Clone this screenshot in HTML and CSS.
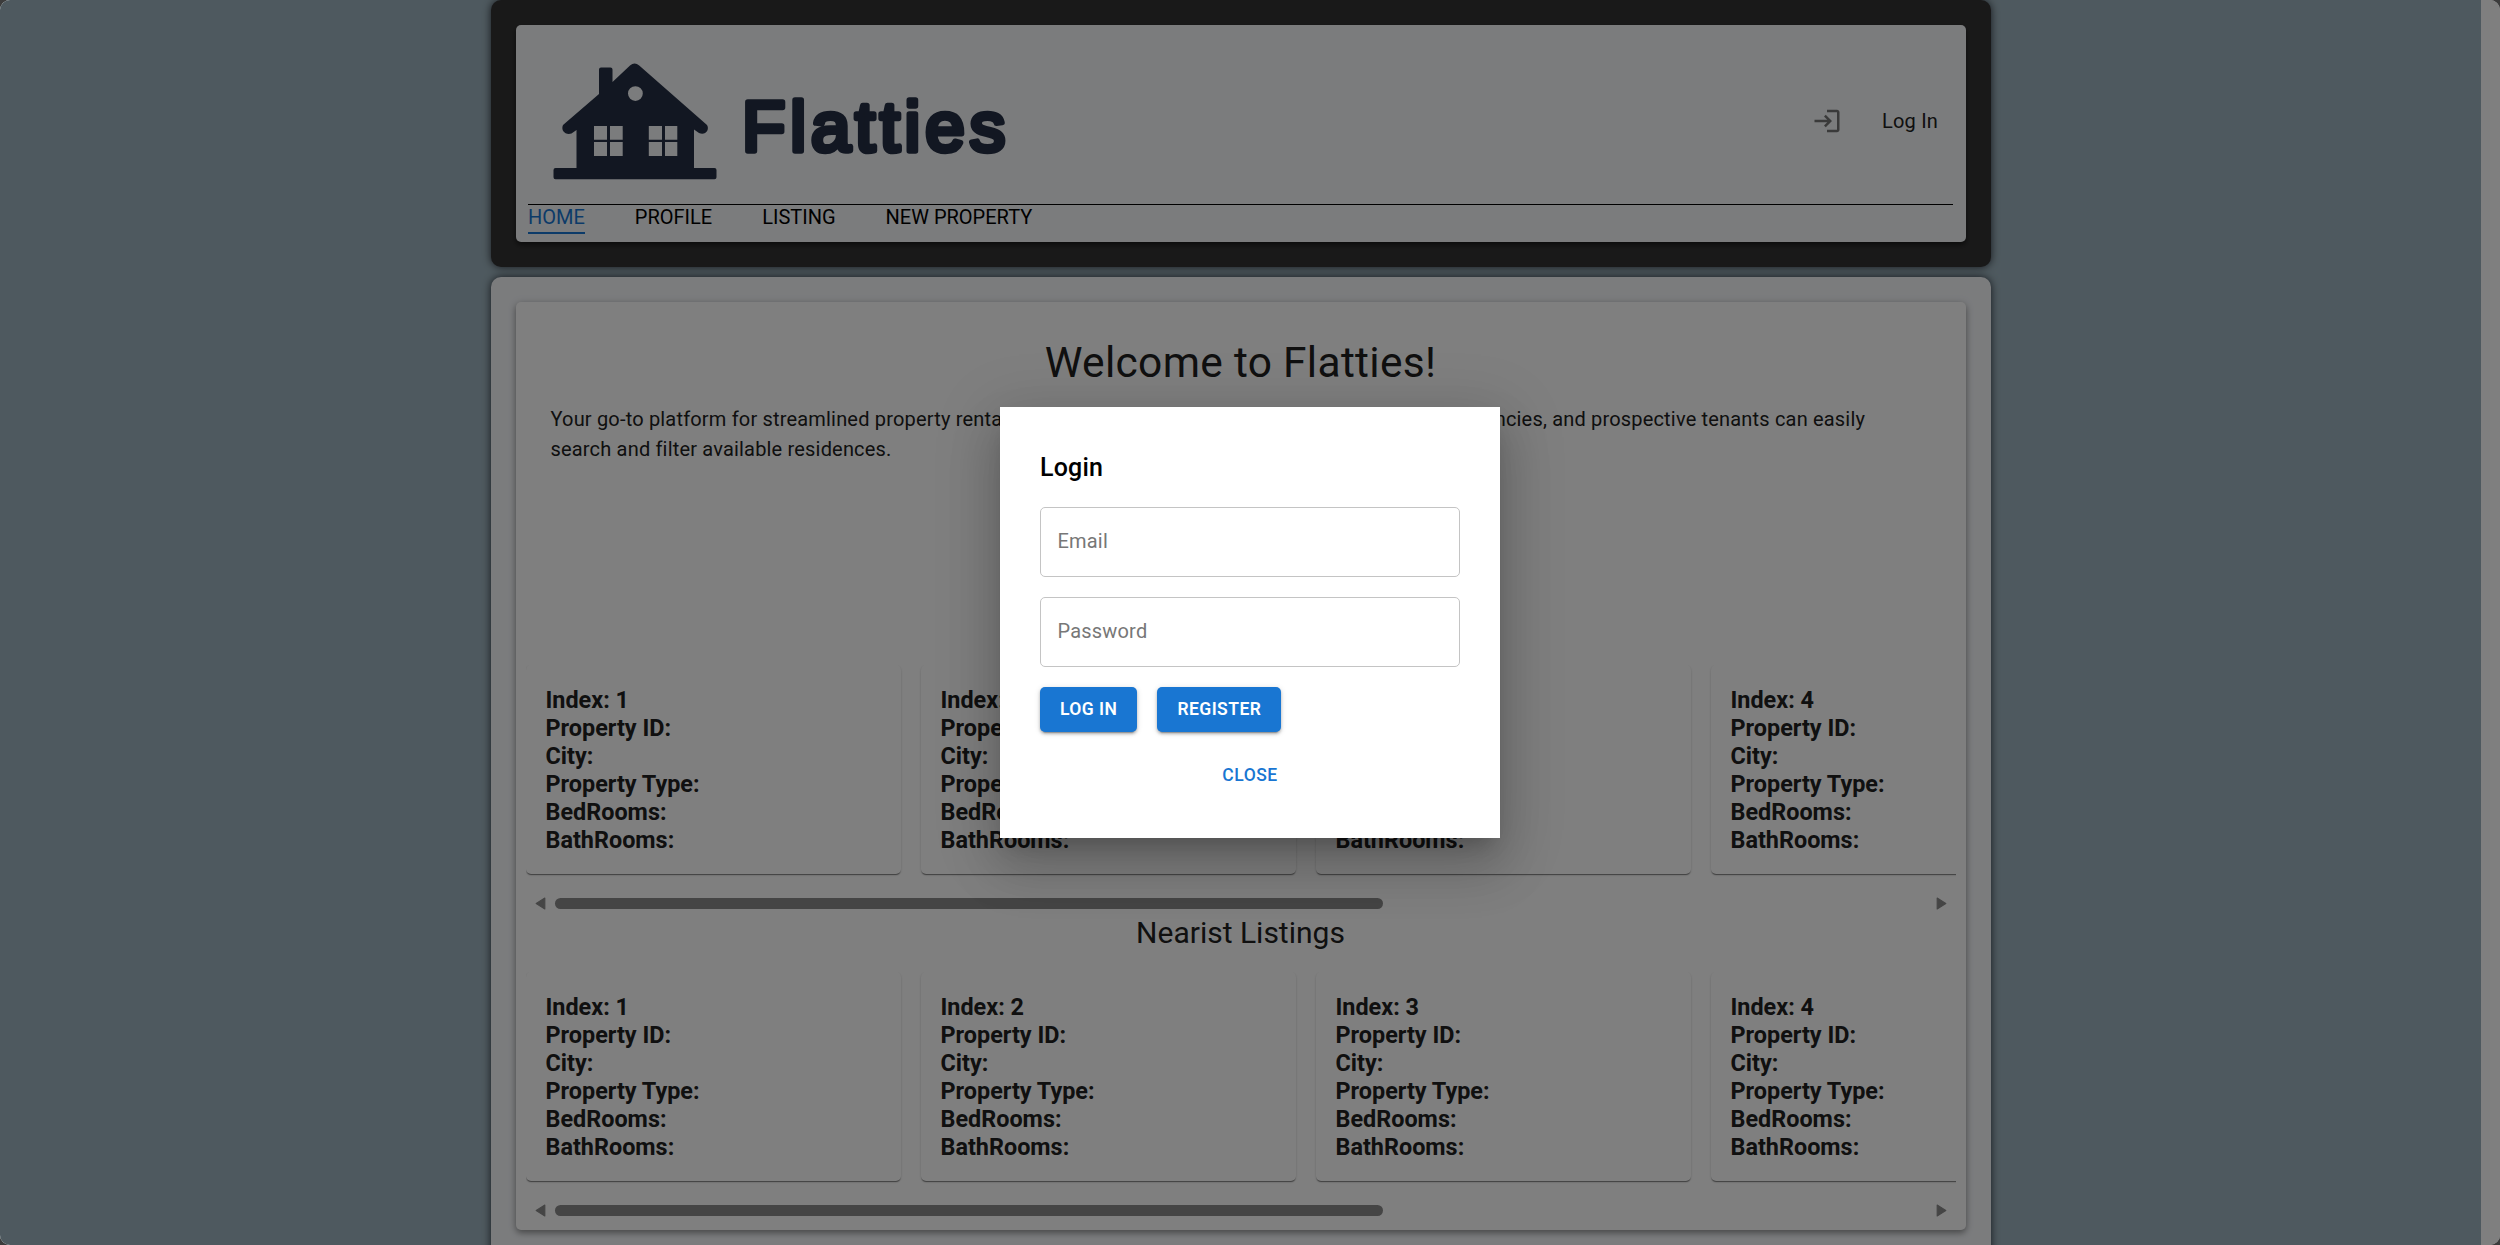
FILE: index.html
```html
<!DOCTYPE html>
<html lang="en">
<head>
<meta charset="utf-8">
<title>Flatties</title>
<link rel="stylesheet" href="styles.css">
</head>
<body>
<div class="window">
  <div class="page">
    <header class="header">
      <div class="header-inner">
        <div class="brand-row">
          <svg class="logo" width="500" height="140" viewBox="528 50 500 140" role="img" aria-label="Flatties">
            <g fill="#252f44">
              <path fill-rule="evenodd" d="M599 69.500q0-2 2-2h9.500q2 0 2 2V82L630 65.500q4.600-4 9.200 0L707 125c3 5-2 11-8 8l-5-3.500V168h20.500q2 0 2 2v7.300q0 2-2 2H555.500q-2 0-2-2V170q0-2 2-2h21V130l-5 3.500c-6 2-11-3-8.500-8.500L599 94zM635.400 86.200a7.400 7.400 0 1 0 0 14.800 7.400 7.400 0 0 0 0-14.800zM594 126h13v13.700h-13zM610 126h12.700v13.700H610zM594 142h13v14h-13zM610 142h12.700v14H610zM648.800 126H662v13.700h-13.200zM665 126h12.300v13.700H665zM648.800 142H662v14h-13.200zM665 142h12.300v14H665z"/>
            </g>
            <text class="logo-text" x="742" y="150.500">Flatties</text>
          </svg>
          <div class="account">
            <svg class="login-icon" width="30" height="30" viewBox="0 0 24 24"><path d="M11 7 9.600 8.400l2.600 2.600H2v2h10.200l-2.600 2.600L11 17l5-5zm9 12h-8v2h8c1.100 0 2-.9 2-2V5c0-1.100-.9-2-2-2h-8v2h8z"/></svg>
            <span>Log In</span>
          </div>
        </div>
        <nav class="nav">
          <a class="nav-item active">HOME</a>
          <a class="nav-item">PROFILE</a>
          <a class="nav-item">LISTING</a>
          <a class="nav-item">NEW PROPERTY</a>
        </nav>
      </div>
    </header>
    <main class="main">
      <div class="main-inner">
        <h1 class="title">Welcome to Flatties!</h1>
        <p class="intro">Your go-to platform for streamlined property rentals. Here property owners, landlords and real estate agencies, and prospective tenants can easily<br>search and filter available residences.</p>
        <section class="listing">
          <div class="cards">
            <div class="card">Index: 1<br>Property ID:<br>City:<br>Property Type:<br>BedRooms:<br>BathRooms:</div>
            <div class="card">Index: 2<br>Property ID:<br>City:<br>Property Type:<br>BedRooms:<br>BathRooms:</div>
            <div class="card">Index: 3<br>Property ID:<br>City:<br>Property Type:<br>BedRooms:<br>BathRooms:</div>
            <div class="card">Index: 4<br>Property ID:<br>City:<br>Property Type:<br>BedRooms:<br>BathRooms:</div>
          </div>
          <div class="scroll"><svg class="arrow" viewBox="0 0 10 12"><path d="M9 1v10L1 6z"/></svg><div class="thumb"></div><svg class="arrow" viewBox="0 0 10 12"><path d="M1 1v10l8-5z"/></svg></div>
        </section>
        <h2 class="subtitle">Nearist Listings</h2>
        <section class="listing">
          <div class="cards">
            <div class="card">Index: 1<br>Property ID:<br>City:<br>Property Type:<br>BedRooms:<br>BathRooms:</div>
            <div class="card">Index: 2<br>Property ID:<br>City:<br>Property Type:<br>BedRooms:<br>BathRooms:</div>
            <div class="card">Index: 3<br>Property ID:<br>City:<br>Property Type:<br>BedRooms:<br>BathRooms:</div>
            <div class="card">Index: 4<br>Property ID:<br>City:<br>Property Type:<br>BedRooms:<br>BathRooms:</div>
          </div>
          <div class="scroll"><svg class="arrow" viewBox="0 0 10 12"><path d="M9 1v10L1 6z"/></svg><div class="thumb"></div><svg class="arrow" viewBox="0 0 10 12"><path d="M1 1v10l8-5z"/></svg></div>
        </section>
      </div>
    </main>
  </div>
  <div class="backdrop">
    <div class="dialog">
      <h2 class="dialog-title">Login</h2>
      <div class="field">Email</div>
      <div class="field">Password</div>
      <div class="actions">
        <button class="btn">LOG IN</button>
        <button class="btn">REGISTER</button>
      </div>
      <button class="btn btn-text">CLOSE</button>
    </div>
  </div>
</div>
</body>
</html>
```
FILE: styles.css
```css
* { box-sizing: border-box; }
html, body { margin: 0; height: 100%; overflow: hidden; }
body {
  background: #3c3c3c;
  font-family: Roboto, "Liberation Sans", sans-serif;
  font-size: 20px;
  color: #212121;
}
.window {
  position: relative;
  height: 1245px;
  overflow: hidden;
  border-radius: 10px;
  background: #fff;
  padding-right: 19px;
}
.page {
  height: 100%;
  overflow: hidden;
  background: #9db3be;
  display: flex;
  flex-direction: column;
  align-items: center;
  gap: 10px;
}
.header, .main {
  flex: none;
  width: 1500px;
  padding: 25px;
  border-radius: 10px;
  box-shadow: 0 0 8px rgba(0, 0, 10, .75);
}
.header { height: 267px; background: #333; }
.main { height: 1000px; background: #f6f8fb; }
.header-inner {
  height: 217px;
  padding: 12.500px;
  border-radius: 5px;
  background: #f6f8fa;
  box-shadow: 0 3px 5px rgba(0, 0, 0, .5);
}
.brand-row {
  display: flex;
  align-items: center;
  justify-content: space-between;
  height: 167px;
  border-bottom: 1px solid #000;
}
.logo { margin-top: -2px; }
.logo-text {
  font-family: "Liberation Sans", sans-serif;
  font-size: 71px;
  letter-spacing: 4.900px;
  fill: #252f44;
  stroke: #252f44;
  stroke-width: 5.500px;
  stroke-linejoin: round;
}
.account { display: flex; align-items: center; gap: 40px; padding-right: 15px; letter-spacing: .19px; }
.login-icon { fill: #757575; }
.nav { display: flex; gap: 50px; line-height: 25px; color: #000; }
.nav-item { height: 29px; }
.active { color: #1976d2; border-bottom: 2px solid #1976d2; }
.main-inner {
  height: 928px;
  padding: 0 10px;
  border-radius: 5px;
  background: #fff;
  box-shadow: 0 3px 6px rgba(0, 0, 0, .35), 0 1px 10px rgba(0, 0, 0, .12);
}
.title {
  margin: 0;
  padding-top: 35px;
  height: 102px;
  font-size: 42.500px;
  line-height: 52px;
  font-weight: 400;
  letter-spacing: .3px;
  text-align: center;
}
.intro { margin: 0; height: 261px; padding-left: 25px; line-height: 30px; letter-spacing: .18px; white-space: nowrap; }
.listing { height: 252px; overflow: hidden; }
.cards { display: flex; gap: 20px; height: 215px; overflow: hidden; }
.card {
  flex: 0 0 375px;
  height: 209px;
  padding: 21px 20px;
  border-radius: 5px;
  box-shadow: 0 2px 1px -1px rgba(0, 0, 0, .3), 0 1px 1px rgba(0, 0, 0, .2), 0 1px 3px rgba(0, 0, 0, .12);
  font-size: 23.400px;
  line-height: 28px;
  font-weight: 700;
}
.scroll { display: flex; align-items: center; gap: 9px; padding: 17px 9px 0 9px; }
.arrow { width: 11px; height: 13px; fill: #8a8a8a; stroke: #8a8a8a; stroke-linejoin: round; }
.thumb { width: 828px; height: 11px; border-radius: 6px; background: #8a8a8a; margin-right: auto; }
.subtitle { margin: 0; height: 55px; font-size: 30px; line-height: 32px; font-weight: 400; text-align: center; }
.backdrop {
  position: absolute;
  inset: 0;
  display: flex;
  align-items: center;
  justify-content: center;
  background: rgba(0, 0, 0, .5);
}
.dialog {
  width: 500px;
  height: 431px;
  padding: 40px;
  display: flex;
  flex-direction: column;
  background: #fff;
  box-shadow: 0 14px 19px -9px rgba(0, 0, 0, .2), 0 30px 48px 4px rgba(0, 0, 0, .14), 0 11px 58px 10px rgba(0, 0, 0, .12);
}
.dialog-title { margin: 0 0 20px; font-size: 25px; height: 40px; line-height: 42px; font-weight: 500; letter-spacing: .19px; color: #000; }
.field {
  height: 70px;
  margin-bottom: 20px;
  padding: 0 16.500px;
  border: 1px solid #c4c4c4;
  border-radius: 5px;
  line-height: 66px;
  letter-spacing: .19px;
  color: #777;
}
.actions { display: flex; gap: 20px; margin-bottom: 20px; }
.btn {
  height: 45px;
  padding: 0 20px 2px;
  border: 0;
  border-radius: 5px;
  background: #1976d2;
  color: #fff;
  font: 600 17.500px Roboto, sans-serif;
  letter-spacing: .45px;
  box-shadow: 0 4px 1px -3px rgba(0, 0, 0, .2), 0 2px 3px rgba(0, 0, 0, .25), 0 1px 6px rgba(0, 0, 0, .12);
}
.btn-text { align-self: center; padding-bottom: 0; background: none; color: #1976d2; font-weight: 500; letter-spacing: .5px; box-shadow: none; }
```
